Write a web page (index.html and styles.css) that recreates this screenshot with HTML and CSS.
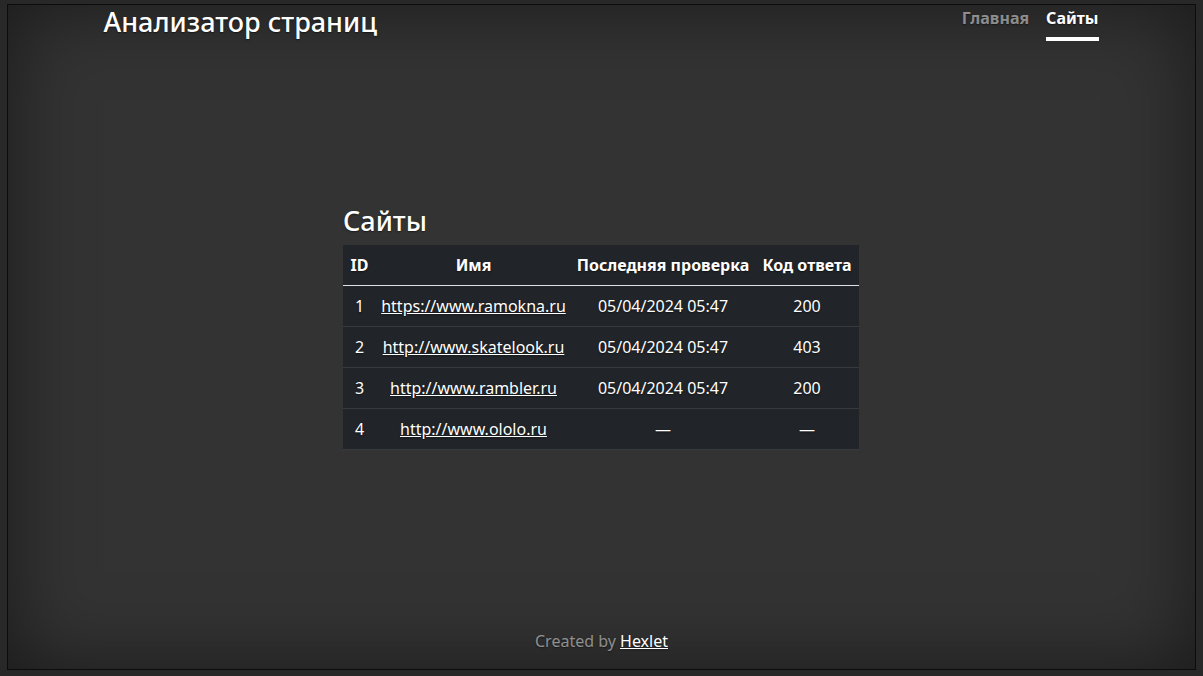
FILE: index.html
```html
<!DOCTYPE html>
<html lang="ru">
<head>
<meta charset="utf-8">
<title>Анализатор страниц</title>
<link rel="stylesheet" href="styles.css">
</head>
<body>
<div class="frame">
  <header class="header">
    <h3 class="brand">Анализатор страниц</h3>
    <nav class="nav">
      <a class="nav-link" href="#">Главная</a>
      <a class="nav-link active" href="#">Сайты</a>
    </nav>
  </header>
  <main class="main">
    <div class="content">
      <h1 class="title">Сайты</h1>
      <table class="table">
        <colgroup>
          <col class="c-id"><col class="c-name"><col class="c-date"><col class="c-code">
        </colgroup>
        <thead>
          <tr><th>ID</th><th>Имя</th><th>Последняя проверка</th><th>Код ответа</th></tr>
        </thead>
        <tbody>
          <tr><td>1</td><td><a href="#">https://www.ramokna.ru</a></td><td>05/04/2024 05:47</td><td>200</td></tr>
          <tr><td>2</td><td><a href="#">http://www.skatelook.ru</a></td><td>05/04/2024 05:47</td><td>403</td></tr>
          <tr><td>3</td><td><a href="#">http://www.rambler.ru</a></td><td>05/04/2024 05:47</td><td>200</td></tr>
          <tr><td>4</td><td><a href="#">http://www.ololo.ru</a></td><td>—</td><td>—</td></tr>
        </tbody>
      </table>
    </div>
  </main>
  <footer class="footer">
    <p>Created by <a href="#">Hexlet</a></p>
  </footer>
</div>
</body>
</html>
```
FILE: styles.css
```css
html, body {
  margin: 0;
  padding: 0;
  height: 100%;
}
html {
  background: #282828;
}
body {
  padding: 4px 7px 6px 7px;
  box-sizing: border-box;
  font-family: "Noto Sans", "Open Sans", sans-serif;
  font-size: 16px;
  line-height: 1.5;
  color: #fff;
  text-shadow: 0 0.05rem 0.1rem rgba(0, 0, 0, 0.5);
}
.frame {
  box-sizing: border-box;
  height: 100%;
  border: 1px solid #0c0c0c;
  background: #333;
  box-shadow: inset 0 0 5rem rgba(0, 0, 0, 0.5);
  display: flex;
  flex-direction: column;
  text-align: center;
}
.header {
  width: 996px;
  margin: 0 auto;
  display: flex;
  justify-content: space-between;
  align-items: flex-start;
}
.brand {
  margin: 0;
  font-size: 27px;
  font-weight: 500;
  line-height: 1.25;
}
.nav {
  display: flex;
  gap: 17px;
  margin-right: 1px;
}
.nav-link {
  font-size: 16px;
  font-weight: 700;
  line-height: 27px;
  padding: 0 0 5px;
  color: rgba(255, 255, 255, 0.5);
  text-decoration: none;
  border-bottom: 4px solid transparent;
}
.nav-link.active {
  color: #fff;
  border-bottom-color: #fff;
}
.main {
  flex: 1;
  display: flex;
  align-items: center;
  justify-content: center;
}
.content {
  width: 516px;
  text-align: left;
  margin-top: 0;
  margin-right: 1px;
}
.title {
  margin: 0 0 8px;
  font-size: 27px;
  font-weight: 500;
  line-height: 1.25;
}
.table {
  width: 516px;
  table-layout: fixed;
  border-collapse: collapse;
  background: #212529;
  margin-bottom: 16px;
  text-align: center;
}
.c-id { width: 33px; }
.c-name { width: 195px; }
.c-date { width: 184px; }
.c-code { width: 104px; }
.table th,
.table td {
  padding: 8px 0;
  white-space: nowrap;
}
.table th {
  font-weight: 700;
  border-bottom: 1px solid #dee2e6;
}
.table td {
  border-bottom: 1px solid #373b3e;
}
.table a {
  color: #fff;
}
.footer {
  padding-bottom: 16px;
}
.footer p {
  margin: 0;
  color: rgba(255, 255, 255, 0.5);
}
.footer a {
  color: #fff;
}
```
